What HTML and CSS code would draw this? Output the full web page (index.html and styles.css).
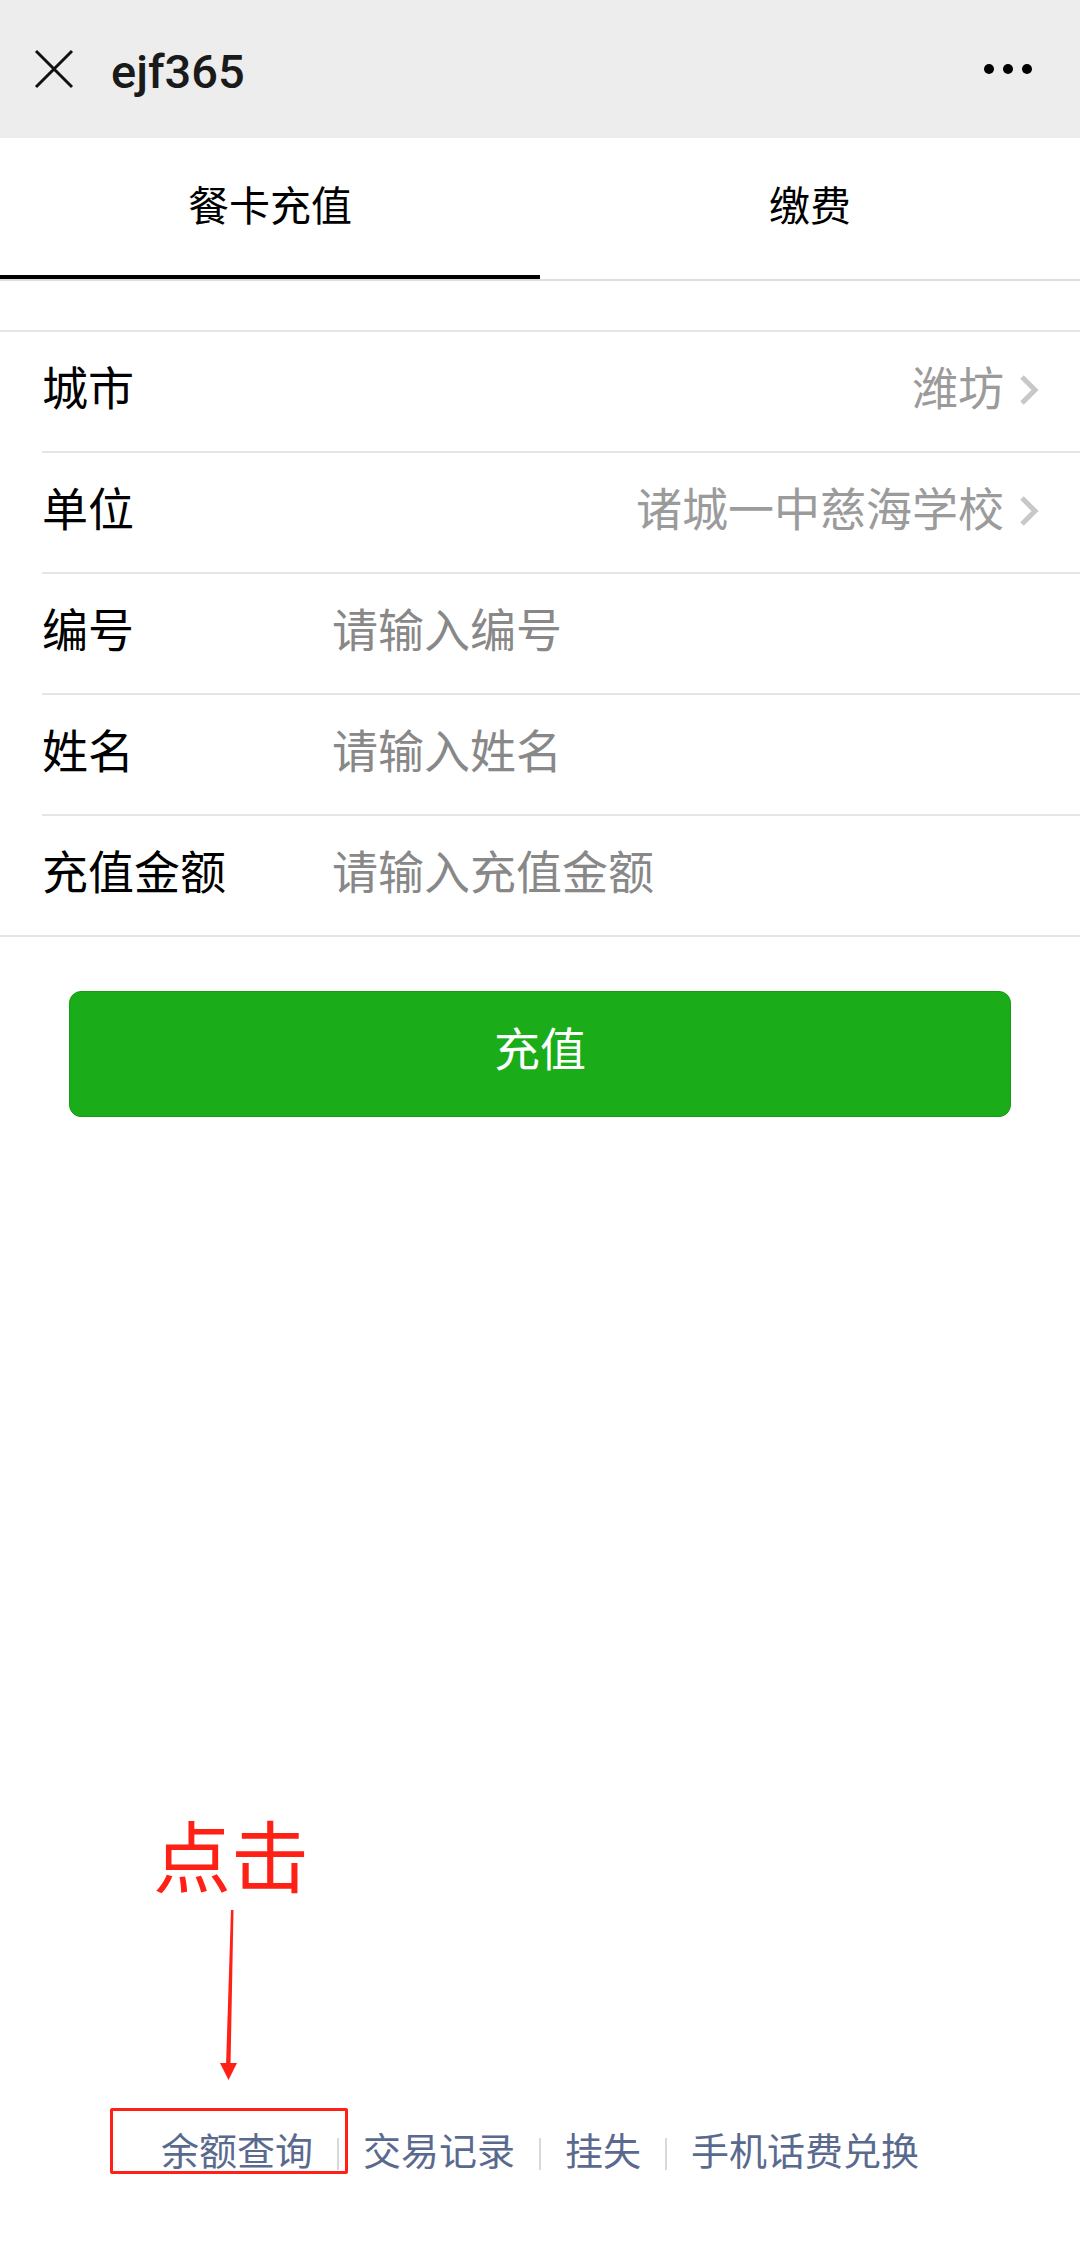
FILE: index.html
```html
<!DOCTYPE html>
<html>
<head>
    <meta charset="utf-8" />
    <title>ejf365</title>
    <link rel="stylesheet" href="styles.css">
</head>
<body>
    <div class="topbar">
        <svg class="close" width="40" height="40" viewBox="0 0 40 40">
            <path d="M2 2 L38 38 M38 2 L2 38" stroke="#111" stroke-width="3" fill="none" />
        </svg>
        <div class="title">ejf365</div>
        <div class="more"><span></span><span></span><span></span></div>
    </div>

    <div class="tabs">
        <div class="tab active">餐卡充值</div>
        <div class="tab">缴费</div>
    </div>

    <div class="form">
        <div class="row">
            <div class="label">城市</div>
            <div class="value">潍坊</div>
            <svg class="arrow" width="22" height="32" viewBox="0 0 22 32">
                <path d="M4 3 L17 16 L4 29" stroke="#c8c8c8" stroke-width="5" fill="none" />
            </svg>
        </div>
        <div class="row">
            <div class="label">单位</div>
            <div class="value">诸城一中慈海学校</div>
            <svg class="arrow" width="22" height="32" viewBox="0 0 22 32">
                <path d="M4 3 L17 16 L4 29" stroke="#c8c8c8" stroke-width="5" fill="none" />
            </svg>
        </div>
        <div class="row">
            <div class="label">编号</div>
            <div class="placeholder">请输入编号</div>
        </div>
        <div class="row">
            <div class="label">姓名</div>
            <div class="placeholder">请输入姓名</div>
        </div>
        <div class="row">
            <div class="label">充值金额</div>
            <div class="placeholder">请输入充值金额</div>
        </div>
    </div>

    <div class="btn">充值</div>

    <div class="spacer"></div>

    <div class="links">
        <span>余额查询</span>
        <i></i>
        <span>交易记录</span>
        <i></i>
        <span>挂失</span>
        <i></i>
        <span>手机话费兑换</span>
    </div>

    <!-- annotation -->
    <div class="note">点击</div>
    <svg class="pointer" width="30" height="180" viewBox="0 0 30 180">
        <polygon points="16,5 18.5,5 15.5,161 11,161" fill="#ff2116" />
        <polygon points="5,158 22,158 13.5,175" fill="#ff2116" />
    </svg>
    <div class="mark"></div>
</body>
</html>
```

FILE: styles.css
```css
html, body {
    margin: 0;
    padding: 0;
}

body {
    width: 1080px;
    min-height: 100vh;
    background: white;
    font-family: "Noto Sans CJK SC", "Roboto", sans-serif;
    color: black;
    display: flex;
    flex-direction: column;
    position: relative;
}

.topbar {
    height: 138px;
    background-color: #ededed;
    display: flex;
    align-items: center;
    padding: 0 48px 0 34px;
}

.close {
    width: 40px;
    height: 40px;
}

.title {
    font-family: "Roboto", sans-serif;
    font-weight: 500;
    font-size: 47px;
    color: #1a1a1a;
    margin-left: 37px;
    flex: 1;
    margin-top: 5px;
}

.more {
    display: flex;
    gap: 9px;
}

.more span {
    width: 10px;
    height: 10px;
    border-radius: 50%;
    background: black;
}

.tabs {
    display: flex;
    height: 141px;
    border-bottom: 2px solid #dedede;
}

.tab {
    flex: 1;
    display: flex;
    align-items: center;
    justify-content: center;
    font-size: 41px;
    padding-bottom: 8px;
    box-sizing: border-box;
    border-bottom: 4px solid transparent;
}

.tab.active {
    border-bottom-color: black;
}

.form {
    margin-top: 49px;
    border-top: 2px solid #e5e5e5;
    border-bottom: 2px solid #e5e5e5;
}

.row {
    height: 119px;
    box-sizing: border-box;
    padding-bottom: 13px;
    display: flex;
    align-items: center;
    margin-left: 42px;
    padding-right: 40px;
    font-size: 46px;
}

.row + .row {
    border-top: 2px solid #e5e5e5;
    height: 121px;
}

.label {
    width: 290px;
}

.value {
    flex: 1;
    text-align: right;
    color: #9b9b9b;
    margin-right: 14px;
}

.placeholder {
    color: #888;
}

.arrow {
    width: 22px;
    height: 32px;
    margin-top: 10px;
}

.btn {
    margin: 54px 69px 0;
    height: 126px;
    padding-bottom: 16px;
    border-radius: 12px;
    background-color: #1aad19;
    border: 1px solid #179b16;
    box-sizing: border-box;
    color: white;
    font-size: 46px;
    display: flex;
    align-items: center;
    justify-content: center;
}

.spacer {
    flex: 1;
}

.links {
    display: flex;
    justify-content: center;
    align-items: center;
    gap: 24px;
    font-size: 38px;
    line-height: 50px;
    color: #5a6a8f;
    padding-bottom: 90px;
}

.links i {
    width: 2px;
    height: 32px;
    background: #d8d8d8;
    margin-top: 10px;
}

.note {
    position: absolute;
    left: 153px;
    top: 1814px;
    font-size: 78px;
    line-height: 78px;
    color: #ff2116;
}

.pointer {
    position: absolute;
    left: 215px;
    top: 1905px;
}

.mark {
    position: absolute;
    left: 110px;
    top: 2108px;
    width: 238px;
    height: 66px;
    border: 3px solid #ff2116;
    border-radius: 2px;
    box-sizing: border-box;
}
```
